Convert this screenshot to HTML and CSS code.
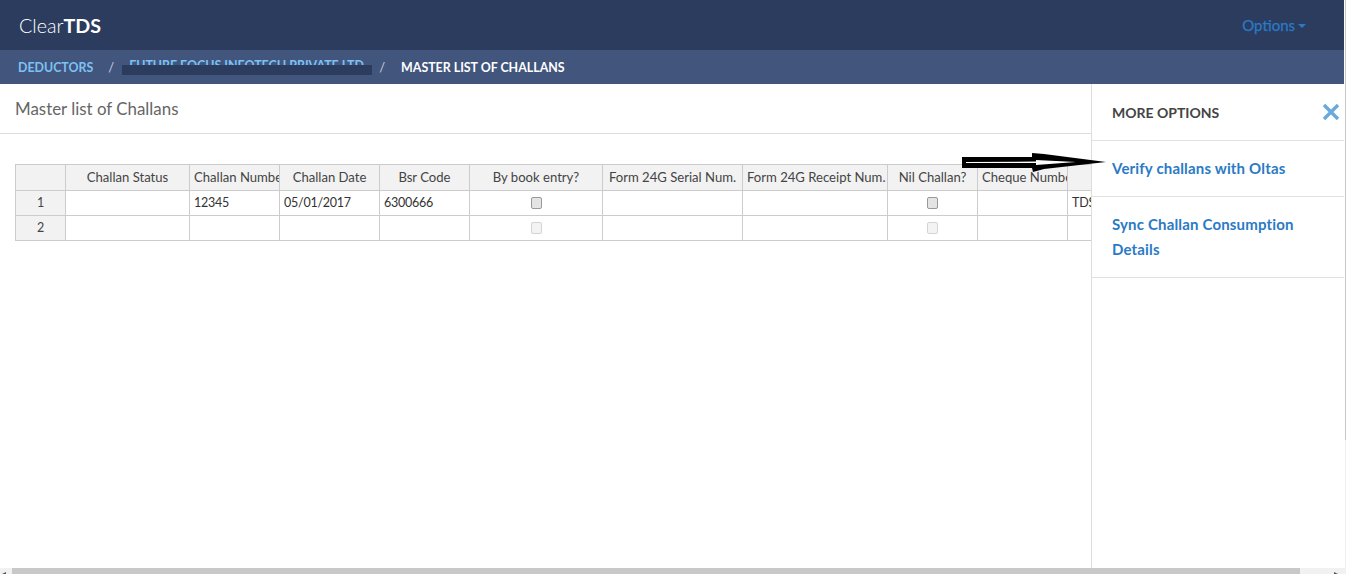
FILE: index.html
```html
<!DOCTYPE html>
<html lang="en">
<head>
<meta charset="utf-8">
<title>ClearTDS</title>
<link rel="stylesheet" href="styles.css">
</head>
<body>
<div class="shell">
  <div class="upper">
    <div class="app">
      <header class="topbar">
        <a class="brand">Clear<b>TDS</b></a>
        <a class="options">Options<span class="caret"></span></a>
      </header>
      <nav class="crumbs">
        <a class="crumb-link">DEDUCTORS</a>
        <span class="sep sep-a">/</span>
        <span class="redacted"><a class="crumb-link">FUTURE FOCUS INFOTECH PRIVATE LTD</a><span class="redact-bar"></span></span>
        <span class="sep sep-b">/</span>
        <span class="crumb-current">MASTER LIST OF CHALLANS</span>
      </nav>
      <main class="content">
        <h1 class="page-title">Master list of Challans</h1>
        <div class="grid-wrap">
          <table class="grid">
            <colgroup>
              <col class="c0"><col class="c1"><col class="c2"><col class="c3"><col class="c4"><col class="c5"><col class="c6"><col class="c7"><col class="c8"><col class="c9"><col class="c10">
            </colgroup>
            <thead>
              <tr>
                <th></th><th>Challan Status</th><th class="left">Challan Number</th><th>Challan Date</th><th>Bsr Code</th><th>By book entry?</th><th>Form 24G Serial Num.</th><th>Form 24G Receipt Num.</th><th>Nil Challan?</th><th class="left">Cheque Number</th><th></th>
              </tr>
            </thead>
            <tbody>
              <tr>
                <th>1</th><td></td><td>12345</td><td>05/01/2017</td><td>6300666</td><td class="mid"><span class="box"></span></td><td></td><td></td><td class="mid"><span class="box"></span></td><td></td><td>TDS</td>
              </tr>
              <tr>
                <th>2</th><td></td><td></td><td></td><td></td><td class="mid"><span class="box off"></span></td><td></td><td></td><td class="mid"><span class="box off"></span></td><td></td><td></td>
              </tr>
            </tbody>
          </table>
        </div>
        <aside class="panel">
          <div class="panel-head">
            <span class="panel-title">MORE OPTIONS</span>
            <svg class="close" viewBox="0 0 18 18" width="18" height="18"><path d="M2 2 L16 16 M16 2 L2 16" fill="none" stroke="#6aa9de" stroke-width="3.4"/></svg>
          </div>
          <a class="panel-item">Verify challans with Oltas</a>
          <a class="panel-item">Sync Challan Consumption Details</a>
        </aside>
        <svg class="arrow" viewBox="0 0 147 22" width="147" height="22">
          <path d="M1 5 L71 5 L71 1 L83 2 L145 10 L83 17 L72 20 L71 16 L1 16 Z" fill="#000"/>
          <path d="M5 10 L75 9.6 L75 8 L115 10 L75 13 L75 11 L5 11 Z" fill="#fff"/>
        </svg>
      </main>
    </div>
    <div class="vscroll"><span class="vthumb"></span></div>
  </div>
  <div class="hscroll">
    <span class="hbtn"><svg viewBox="0 0 12 6" width="12" height="6"><path d="M2 6 L6 4 L6 6 Z" fill="#555"/></svg></span>
    <span class="hthumb"></span>
    <span class="hbtn-end"><svg viewBox="0 0 12 6" width="12" height="6"><path d="M6 4 L10 6 L6 6 Z" fill="#555"/></svg></span>
  </div>
</div>
</body>
</html>
```
FILE: styles.css
```css
* { box-sizing: border-box; }
html, body { margin: 0; height: 100%; overflow: hidden; background: #fff; }
body { font-family: "Lato", "Liberation Sans", sans-serif; color: #555; }
.shell { display: flex; flex-direction: column; height: 574px; width: 1346px; }
.upper { display: flex; flex: 1; min-height: 0; }
.app { display: flex; flex-direction: column; width: 1344px; flex: none; }
.vscroll { width: 2px; flex: none; display: flex; flex-direction: column; align-items: flex-end; background: linear-gradient(to right, #fff 1px, #f1f1f1 1px); }
.vthumb { width: 1px; height: 440px; background: #c8c8c8; }

.topbar { height: 50px; background: #2c3c5e; display: flex; align-items: center; justify-content: space-between; padding: 0 38px 0 19px; flex: none; }
.brand { font-size: 19.7px; font-weight: 300; color: #fff; }
.brand b { font-weight: 700; }
.options { font-size: 15px; color: #2a7ac5; display: flex; align-items: center; -webkit-text-stroke: 0.25px #2a7ac5; }
.caret { margin-left: 3px; margin-top: 2px; border-top: 4px solid #2a7ac5; border-left: 4px solid transparent; border-right: 4px solid transparent; }

.crumbs { height: 34px; background: #41557d; display: flex; align-items: center; font-size: 12.4px; font-weight: 700; padding-left: 18px; flex: none; }
.crumb-link { color: #7cc2f5; }
.crumb-current { color: #fff; }
.sep { color: #ccd; font-weight: 400; font-size: 13px; }
.sep-a { margin-left: 15px; }
.sep-b { margin-left: 7px; margin-right: 16px; }
.redacted { position: relative; margin-left: 8px; width: 250px; height: 18px; overflow: hidden; display: block; white-space: nowrap; padding-left: 7px; line-height: 16px; flex: none; }
.redact-bar { position: absolute; left: 0; right: 0; top: 7px; height: 10px; background: #2c3c5e; }

.content { position: relative; flex: 1; min-height: 0; overflow: hidden; }
.page-title { margin: 0; height: 50px; border-bottom: 1px solid #ddd; font-size: 16.9px; font-weight: 400; color: #666; line-height: 49px; padding-left: 15px; }
.grid-wrap { padding: 30px 0 0 15px; }
.grid { border-collapse: collapse; table-layout: fixed; width: 1152px; font-size: 13.1px; color: #333; }
.c0 { width: 50px; } .c1 { width: 124px; } .c2 { width: 90px; } .c3 { width: 100px; } .c4 { width: 90px; } .c5 { width: 133px; } .c6 { width: 140px; } .c7 { width: 145px; } .c8 { width: 90px; } .c9 { width: 90px; } .c10 { width: 100px; }
.grid th, .grid td { border: 1px solid #ccc; height: 25px; padding: 0 4px 2px; white-space: nowrap; overflow: hidden; }
.grid th { background: #f2f2f2; font-weight: 400; color: #444; text-align: center; }
.grid tbody th { font-size: 12.5px; }
.grid th.left { text-align: left; }
.grid td { background: #fff; font-size: 12.5px; letter-spacing: -0.25px; }
.grid thead th { height: 26px; padding-bottom: 1px; }
.grid td.mid { text-align: center; }
.box { display: inline-block; width: 11px; height: 12px; border: 1px solid #999; border-radius: 2px; background: #e4e4e4; vertical-align: middle; }
.box.off { border-color: #d4d4d4; background: #f3f3f3; }

.panel { position: absolute; left: 1091px; top: 0; right: 0; bottom: 0; background: #fff; border-left: 1px solid #ddd; display: flex; flex-direction: column; }
.panel-head { height: 57px; border-bottom: 1px solid #e2e2e2; display: flex; align-items: center; justify-content: space-between; padding: 0 4px 0 20px; flex: none; }
.panel-title { font-size: 14px; font-weight: 700; color: #444; }
.panel-item { display: block; padding: 15px 20px; font-size: 15px; letter-spacing: 0.17px; font-weight: 700; line-height: 25px; color: #2a7ac5; border-bottom: 1px solid #e2e2e2; }

.arrow { position: absolute; left: 961px; top: 68px; }

.hscroll { height: 6px; background: #f1f1f1; display: flex; flex: none; }
.hbtn { width: 12px; height: 6px; flex: none; display: block; }
.hthumb { width: 1288px; flex: none; background: #c8c8c8; }
.hbtn-end { flex: 1; display: flex; justify-content: flex-end; padding-right: 6px; }
.hbtn svg, .hbtn-end svg { display: block; }
```
